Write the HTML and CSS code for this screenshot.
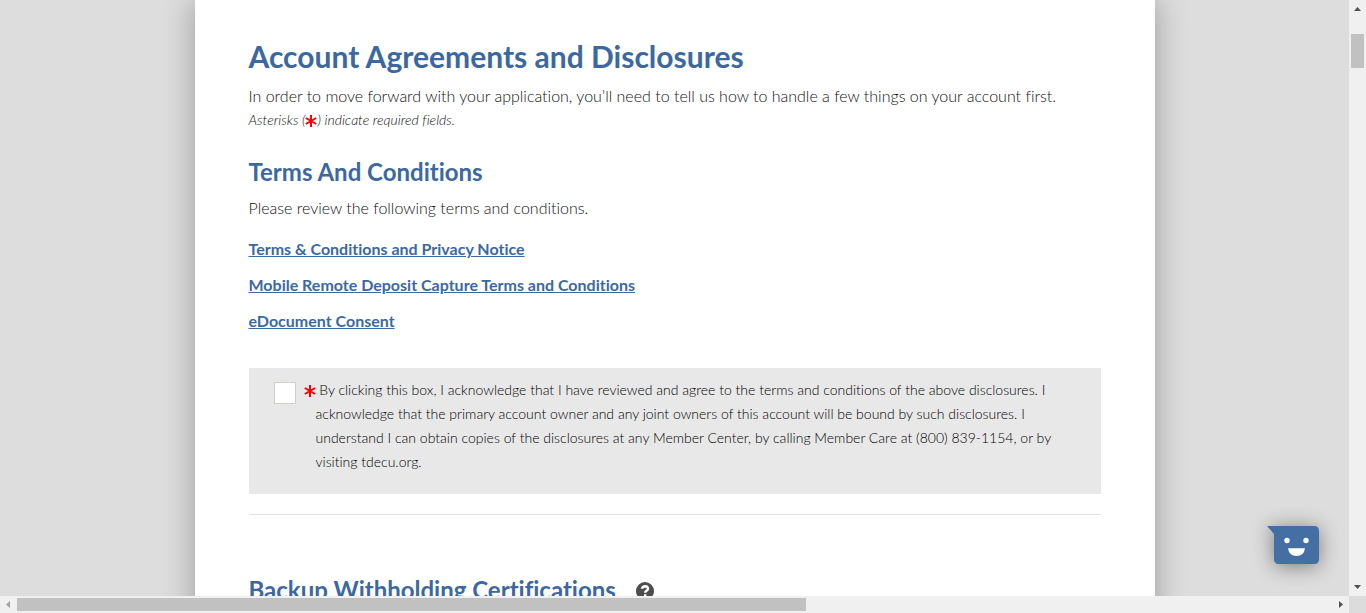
FILE: index.html
```html
<!DOCTYPE html>
<html lang="en">
<head>
<meta charset="utf-8">
<meta name="viewport" content="width=device-width, initial-scale=1">
<title>Account Agreements and Disclosures</title>
<link rel="stylesheet" href="styles.css">
</head>
<body>
<svg class="defs" aria-hidden="true">
  <symbol id="asterisk" viewBox="0 0 12 12"><path d="M6 0v12M.8 3l10.400 6M.8 9l10.400-6" fill="none" stroke="#f00" stroke-width="2"/></symbol>
</svg>
<div class="frame">
  <div class="viewport">
    <main class="sheet">
      <section class="intro">
        <h1 class="title">Account Agreements and Disclosures</h1>
        <p class="text">In order to move forward with your application, you’ll need to tell us how to handle a few things on your account first.</p>
        <p class="note">Asterisks (<svg class="required" role="img" aria-label="required"><use href="#asterisk"/></svg>) indicate required fields.</p>
      </section>
      <section class="terms">
        <h2 class="subtitle">Terms And Conditions</h2>
        <p class="text">Please review the following terms and conditions.</p>
        <ul class="links">
          <li><a class="link" href="#">Terms &amp; Conditions and Privacy Notice</a></li>
          <li><a class="link" href="#">Mobile Remote Deposit Capture Terms and Conditions</a></li>
          <li><a class="link" href="#">eDocument Consent</a></li>
        </ul>
        <div class="consent">
          <input class="box" type="checkbox" id="agree" required>
          <label class="statement" for="agree"><svg class="required" role="img" aria-label="required"><use href="#asterisk"/></svg> By clicking this box, I acknowledge that I have reviewed and agree to the terms and conditions of the above disclosures. I acknowledge that the primary account owner and any joint owners of this account will be bound by such disclosures. I understand I can obtain copies of the disclosures at any Member Center, by calling Member Care at (800) 839-1154, or by visiting tdecu.org.</label>
        </div>
      </section>
      <section class="backup">
        <h2 class="subtitle">Backup Withholding Certifications</h2>
        <button class="help" type="button" aria-label="Help">
          <svg width="18" height="18" viewBox="0 0 18 18" aria-hidden="true"><circle cx="9" cy="9" r="9" fill="#4d4d4d"/><path d="M6 6.800Q6.500 4.200 9.200 4.200Q12 4.300 12 6.700Q12 8 10.400 8.900Q9.200 9.600 9.200 10.800" fill="none" stroke="#fff" stroke-width="2.400"/><path d="M8 12.200h2.400v2.200H8z" fill="#fff"/></svg>
        </button>
      </section>
    </main>
  </div>
  <div class="scroll scroll-y" aria-hidden="true">
    <svg width="17" height="17"><path d="M5 11h7L8.500 7z" fill="#505050"/></svg>
    <div class="track-y"><div class="thumb-y"></div></div>
    <svg width="17" height="17"><path d="M5 6h7L8.500 10z" fill="#505050"/></svg>
  </div>
  <div class="scroll scroll-x" aria-hidden="true">
    <svg width="17" height="17"><path d="M10 5v7L6 8.500z" fill="#a3a3a3"/></svg>
    <div class="track-x"><div class="thumb-x"></div></div>
    <svg width="17" height="17"><path d="M7 5v7l4-3.500z" fill="#505050"/></svg>
  </div>
  <div class="corner"></div>
</div>
<button class="chat" type="button" aria-label="Open chat">
  <svg width="52" height="38" viewBox="0 0 52 38" aria-hidden="true"><path d="M0 0H47Q52 0 52 5V33Q52 38 47 38H12Q7 38 7 33V8Z" fill="#436fa5"/><circle cx="20" cy="14.500" r="2.700" fill="#fff"/><circle cx="39" cy="14.500" r="2.700" fill="#fff"/><path d="M21 22.300H38Q37 30 29.500 30Q22 30 21 22.300Z" fill="#fff"/></svg>
</button>
</body>
</html>
```
FILE: styles.css
```css
* { box-sizing: border-box; }

body {
  margin: 0;
  font-family: Lato, "Open Sans", sans-serif;
  font-size: 16px;
  font-weight: 300;
  font-variant-ligatures: none;
  line-height: 24px;
  color: #111;
}

h1, h2, p, ul { margin: 0; padding: 0; }
svg { display: block; }
.defs { display: none; }
button { border: 0; padding: 0; background: none; cursor: pointer; }

.frame {
  display: grid;
  grid-template-columns: minmax(0, 1fr) 17px;
  grid-template-rows: minmax(0, 1fr) 17px;
  height: 100vh;
}

.viewport {
  overflow: hidden;
  background: #ddd;
}

.sheet {
  max-width: 960px;
  min-height: 100%;
  margin: 0 auto;
  padding: 36px 54px;
  background: #fff;
  box-shadow: 0 0 30px rgba(0, 0, 0, 0.3);
}

.title, .subtitle {
  font-weight: 700;
  color: #3c68a2;
}

.title {
  margin-bottom: 8px;
  font-size: 30px;
  line-height: 40px;
}

.subtitle {
  font-size: 24px;
  line-height: 36px;
}

.note {
  font-size: 14px;
  font-style: italic;
}

.required {
  display: inline-block;
  width: 12px;
  height: 12px;
  vertical-align: -2px;
}

.terms {
  margin-top: 22px;
  padding-bottom: 20px;
  border-bottom: 1px solid #e3e3e3;
}

.terms .subtitle { margin-bottom: 6px; }

.links {
  display: grid;
  gap: 12px;
  margin-top: 17px;
  list-style: none;
}

.link {
  font-weight: 700;
  color: #3c68a2;
}

.consent {
  display: flex;
  align-items: flex-start;
  gap: 20px;
  margin-top: 35px;
  padding: 10px 42px 20px 25px;
  background: #e8e8e8;
}

.box {
  flex: none;
  width: 22px;
  height: 22px;
  margin: 4px 0 0;
  appearance: none;
  border: 1px solid #d2cdc6;
  background: #fff;
}

.box:checked { background: #3c68a2; }

.statement {
  font-size: 14px;
  color: #000;
  text-indent: -12px;
}

.backup {
  display: flex;
  align-items: center;
  gap: 20px;
  margin-top: 57px;
}

.help { padding-top: 2px; }

.scroll {
  display: flex;
  background: #f0f0f0;
}

.scroll-y { flex-direction: column; grid-area: 1 / 2; }
.scroll-x { grid-area: 2 / 1; }
.corner { background: #dcdcdc; }
.track-y, .track-x { flex: 1; }

.track-y { padding: 17px 2px 0; }
.track-x { padding: 2px 0; }

.thumb-y {
  height: 34px;
  background: #c1c1c1;
}

.thumb-x {
  width: 60%;
  height: 13px;
  background: #c1c1c1;
}

.chat {
  position: fixed;
  right: 47px;
  bottom: 49px;
  filter: drop-shadow(0 2px 10px rgba(0, 0, 0, 0.45));
}
```
